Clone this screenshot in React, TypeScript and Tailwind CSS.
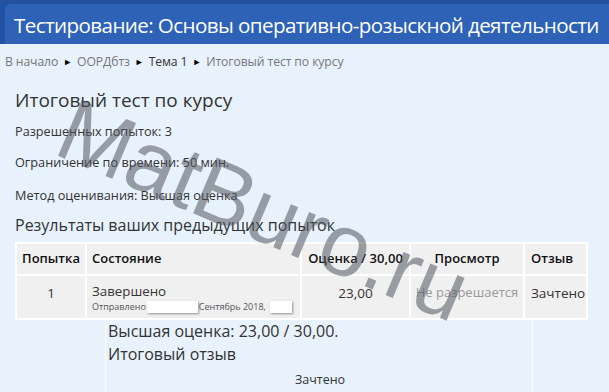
import React from "react";

const font = { fontFamily: '"Open Sans", "Noto Sans", sans-serif' };

const crumbs = [
  { label: "В начало", dark: false },
  { label: "ООРДбтз", dark: false },
  { label: "Тема 1", dark: true },
  { label: "Итоговый тест по курсу", dark: false },
];

export default function App() {
  return (
    <div
      className="relative w-[609px] h-[392px] overflow-hidden bg-[#e8f2fc] text-[#333]"
      style={font}
    >
      {/* шапка */}
      <div className="bg-[#2452a3] pt-[4px] pl-[5px]">
        <div className="h-[40px] rounded-tl-[6px] bg-[#2d62b6] pl-[9px] pt-[3px] flex items-center">
          <h1 className="text-[20.6px] leading-none text-white whitespace-nowrap tracking-[-0.6px]">
            Тестирование: Основы оперативно-розыскной деятельности
          </h1>
        </div>
      </div>

      {/* хлебные крошки */}
      <div className="h-[36px] pl-[5px] flex items-center text-[12.2px] text-[#777] tracking-[-0.1px]">
        {crumbs.map((c, i) => (
          <span key={i} className="flex items-center">
            <span className={c.dark ? "text-[#333]" : ""}>{c.label}</span>
            {i < crumbs.length - 1 && (
              <span className="mx-[5px] text-[9px] text-black">►</span>
            )}
          </span>
        ))}
      </div>

      <div className="pl-[15px]">
        <h2 className="text-[19px] leading-[40px]">Итоговый тест по курсу</h2>
        <p className="text-[12.7px] leading-[22px]">Разрешенных попыток: 3</p>
        <p className="text-[12.7px] leading-[40px]">Ограничение по времени: 50 мин.</p>
        <p className="text-[12.7px] leading-[26px]">Метод оценивания: Высшая оценка</p>
        <h3 className="text-[16px] leading-[34px]">Результаты ваших предыдущих попыток</h3>

        <table className="w-[573px] border-collapse border-2 border-white text-[13px] bg-[#f0f0f0]">
          <thead>
            <tr className="h-[32px] text-[#111]">
              <th className="w-[70px] border-2 border-white font-semibold">Попытка</th>
              <th className="w-[215px] border-2 border-white text-left pl-[5px] font-semibold">Состояние</th>
              <th className="w-[109px] border-2 border-white font-semibold">Оценка / 30,00</th>
              <th className="w-[114px] border-2 border-white font-semibold">Просмотр</th>
              <th className="border-2 border-white text-left pl-[6px] font-semibold">Отзыв</th>
            </tr>
          </thead>
          <tbody>
            <tr className="h-[44px] align-top">
              <td className="border-2 border-white text-center pt-[7px] text-[13.5px]">1</td>
              <td className="border-2 border-white pl-[5px] pt-[6px]">
                <div className="text-[13.3px] leading-[18px]">Завершено</div>
                <div className="flex items-center text-[9px] text-[#555] leading-[13px]">
                  <span>Отправлено</span>
                  <span className="mx-[1px] h-[12px] w-[51px] bg-white shadow-[1px_1px_2px_rgba(0,0,0,0.4)]" />
                  <span>Сентябрь 2018,</span>
                  <span className="ml-[4px] h-[12px] w-[22px] bg-white shadow-[1px_1px_2px_rgba(0,0,0,0.4)]" />
                </div>
              </td>
              <td className="border-2 border-white text-center pt-[7px] text-[13.5px]">23,00</td>
              <td className="border-2 border-white text-center pt-[7px] text-[13px] text-[#999] whitespace-nowrap">
                Не разрешается
              </td>
              <td className="border-2 border-white pl-[6px] pt-[7px] text-[13.5px]">Зачтено</td>
            </tr>
          </tbody>
        </table>

        <div className="ml-[90px] w-[428px] h-[80px] border-x border-white pl-[2px]">
          <div className="text-[16px] leading-[22px]">Высшая оценка: 23,00 / 30,00.</div>
          <div className="text-[16px] leading-[24px]">Итоговый отзыв</div>
          <div className="text-center text-[12.5px] leading-[28px]">Зачтено</div>
        </div>
      </div>

      {/* водяной знак */}
      <div
        className="absolute left-[46px] top-[78px] origin-bottom-left rotate-[23deg] text-[88px] leading-none whitespace-nowrap text-[rgba(80,85,95,0.55)] pointer-events-none"
        style={{ fontFamily: '"Liberation Sans", Arial, sans-serif' }}
      >
        MatBuro.ru
      </div>
    </div>
  );
}
